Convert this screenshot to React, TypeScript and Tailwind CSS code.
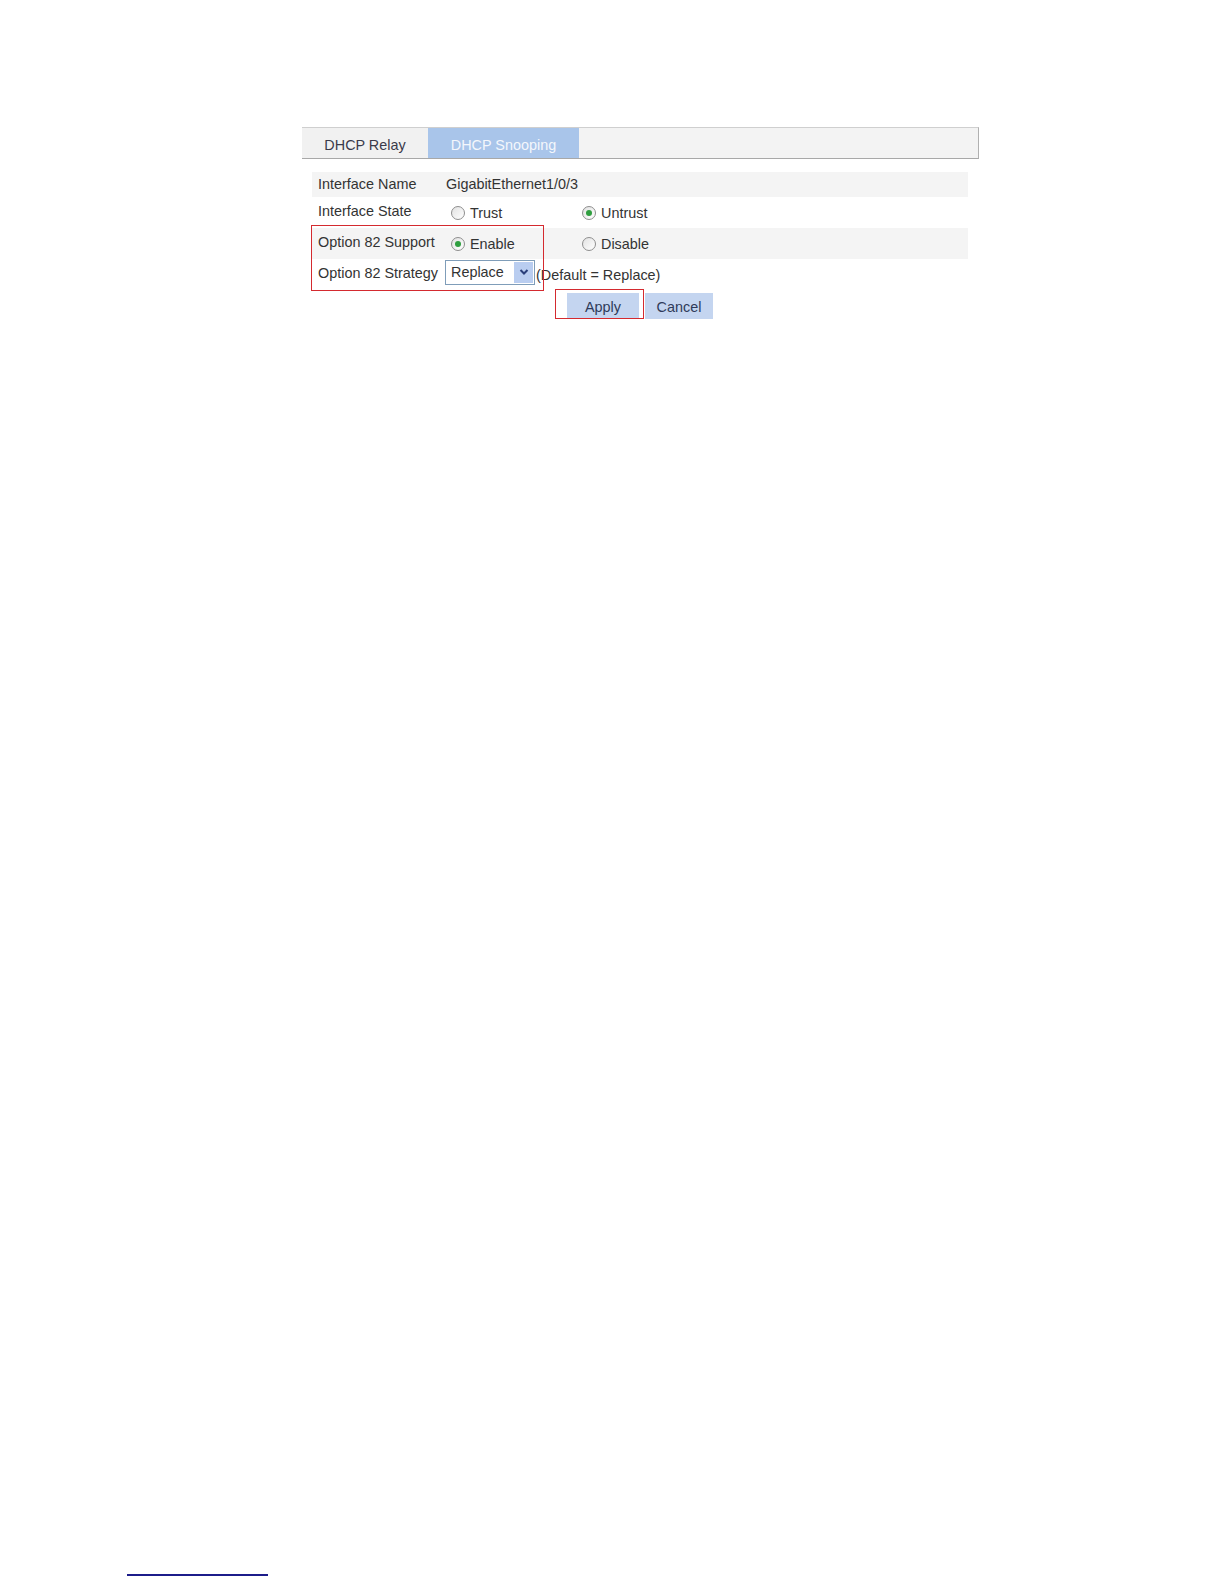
import React from "react";

function Radio({ checked }: { checked?: boolean }) {
  return (
    <span className="inline-flex h-[14px] w-[14px] items-center justify-center rounded-full border border-[#8e8e8e] bg-gradient-to-br from-[#e2e2e2] to-white">
      {checked ? <span className="block h-[6px] w-[6px] rounded-full bg-[#2f9e3f]" /> : null}
    </span>
  );
}

function Option({ checked, label, width }: { checked?: boolean; label: string; width: string }) {
  return (
    <div className={`flex items-center gap-[5px] ${width}`}>
      <Radio checked={checked} />
      <span className="mt-[2px]">{label}</span>
    </div>
  );
}

export default function App() {
  return (
    <div className="relative min-h-[1584px] w-full bg-white font-['Liberation_Sans',Arial,sans-serif] text-[14.4px] leading-none text-[#333]">
      <div className="pl-[302px] pt-[127px]">
        <div className="w-[677px]">
          {/* Tab bar */}
          <div className="flex h-[32px] border-b border-r border-t border-b-[#a8a8a8] border-r-[#b0b0b0] border-t-[#cfcfcf] bg-[#f3f3f3]">
            <div className="flex w-[126px] items-center justify-center bg-[#f1f1f1] pt-[4px] text-[#3a3a4a]">
              DHCP Relay
            </div>
            <div className="flex w-[151px] items-center justify-center bg-[#a9c5ea] pt-[4px] text-[#f4f7fc]">
              DHCP Snooping
            </div>
          </div>

          {/* Form rows */}
          <div className="relative ml-[10px] mt-[13px] w-[656px]">
            <div className="flex h-[25px] items-center bg-[#f4f4f4]">
              <div className="mb-[1px] w-[134px] pl-[6px]">Interface Name</div>
              <div className="mb-[1px]">GigabitEthernet1/0/3</div>
            </div>
            <div className="flex h-[31px] items-center bg-white">
              <div className="mb-[3px] w-[134px] pl-[6px]">Interface State</div>
              <div className="flex items-center pl-[5px]">
                <Option label="Trust" width="w-[131px]" />
                <Option label="Untrust" checked width="w-[100px]" />
              </div>
            </div>
            <div className="flex h-[31px] items-center bg-[#f4f4f4]">
              <div className="mb-[3px] w-[134px] pl-[6px]">Option 82 Support</div>
              <div className="flex items-center pl-[5px]">
                <Option label="Enable" checked width="w-[131px]" />
                <Option label="Disable" width="w-[100px]" />
              </div>
            </div>
            <div className="flex h-[31px] items-center bg-white">
              <div className="mb-[3px] w-[133px] pl-[6px]">Option 82 Strategy</div>
              <div className="mb-[5px] flex h-[25px] w-[90px] items-center border border-[#7f9db9] bg-white">
                <span className="flex-1 pl-[5px]">Replace</span>
                <span className="mr-[1px] flex h-[21px] w-[19px] items-center justify-center bg-[#b9cdf0]">
                  <svg width="10" height="8" viewBox="0 0 10 8">
                    <path d="M1.5 2 L5 5.5 L8.5 2" fill="none" stroke="#2a3f7a" strokeWidth="2" />
                  </svg>
                </span>
              </div>
              <div className="ml-[1px] mt-[1px]">(Default = Replace)</div>
            </div>
            <div className="mt-[3px] flex h-[26px]">
              <div className="ml-[255px] flex w-[72px] items-center justify-center bg-[#c4d5f0] pt-[3px] text-[#2f3b5a]">
                Apply
              </div>
              <div className="ml-[6px] flex w-[68px] items-center justify-center bg-[#c4d5f0] pt-[3px] text-[#2f3b5a]">
                Cancel
              </div>
            </div>

            {/* Highlight boxes */}
            <div className="pointer-events-none absolute left-[-1px] top-[53px] h-[66px] w-[233px] border-[1.5px] border-[#d42a2f]" />
            <div className="pointer-events-none absolute left-[243px] top-[117px] h-[30px] w-[89px] border-[1.5px] border-[#d42a2f]" />
          </div>
        </div>
      </div>

      {/* Footer rule */}
      <div className="ml-[127px] mt-[1255px] h-[2px] w-[141px] bg-[#1c1c8a]" />
    </div>
  );
}
